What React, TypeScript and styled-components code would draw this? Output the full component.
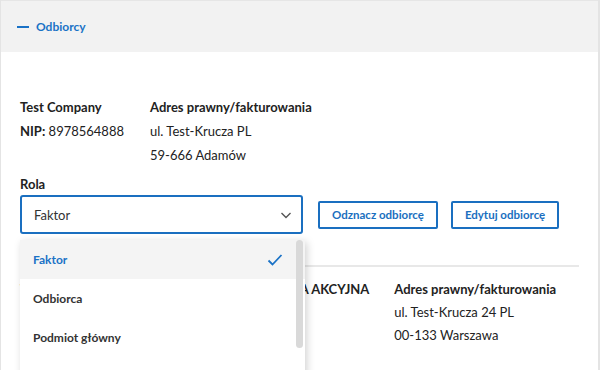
import React from "react";
import styled, { createGlobalStyle } from "styled-components";

const GlobalStyle = createGlobalStyle`
  html, body { margin: 0; padding: 0; background: #ffffff; }
  body { font-family: Lato, "Open Sans", Arial, sans-serif; color: #222222; }
  * { box-sizing: border-box; }
`;

const Panel = styled.div`
  width: 600px;
  height: 370px;
  overflow: hidden;
  border-left: 1px solid #e4e4e4;
  border-right: 2px solid #e4e4e4;
  background: #ffffff;
`;

const Header = styled.div`
  height: 52px;
  background: #f2f2f2;
  border-top: 1px solid #e6e6e6;
  display: flex;
  align-items: center;
  gap: 7px;
  padding-left: 16px;
`;

const Dash = styled.span`
  display: block;
  width: 12px;
  height: 2px;
  background: #1a72c6;
`;

const HeaderTitle = styled.span`
  font-size: 12px;
  font-weight: 700;
  color: #1a72c6;
`;

const Body = styled.div`
  padding: 43px 19px 0 19px;
`;

const Entity = styled.div`
  display: flex;
  gap: 26px;
`;

const Column = styled.div`
  display: flex;
  flex-direction: column;
`;

const Line = styled.div<{ $bold?: boolean }>`
  font-size: 13px;
  line-height: 24px;
  font-weight: ${(p) => (p.$bold ? 700 : 400)};
  white-space: nowrap;
`;

const Strong = styled.span`
  font-weight: 700;
`;

const Label = styled.div`
  margin-top: 7px;
  font-size: 13px;
  font-weight: 700;
  line-height: 20px;
  margin-bottom: 1px;
`;

const ControlRow = styled.div`
  display: flex;
  align-items: center;
  gap: 15px;
`;

const ButtonGroup = styled.div`
  display: flex;
  gap: 13px;
`;

const SelectWrap = styled.div`
  position: relative;
  width: 283px;
`;

const SelectBox = styled.div`
  height: 39px;
  border: 2px solid #1a6fc0;
  border-radius: 3px;
  display: flex;
  align-items: center;
  justify-content: space-between;
  padding: 0 8px 0 12px;
  font-size: 13px;
  color: #333333;
`;

const Button = styled.button`
  height: 28px;
  padding: 0 12px;
  border: 2px solid #1a6fc0;
  border-radius: 2px;
  background: #ffffff;
  color: #1a6fc0;
  font-family: inherit;
  font-size: 11.5px;
  font-weight: 700;
  cursor: pointer;
`;

const Menu = styled.div`
  position: absolute;
  top: calc(100% + 6px);
  left: 0;
  width: 285px;
  height: 200px;
  background: #ffffff;
  box-shadow: 2px 2px 8px rgba(0, 0, 0, 0.18);
  z-index: 10;
`;

const Option = styled.div<{ $active?: boolean }>`
  height: 39px;
  display: flex;
  align-items: center;
  justify-content: space-between;
  padding: 0 22px 0 13px;
  font-size: 12px;
  font-weight: 700;
  color: ${(p) => (p.$active ? "#1a72c6" : "#333333")};
  background: ${(p) => (p.$active ? "#f4f4f4" : "#ffffff")};
`;

const Scrollbar = styled.div`
  position: absolute;
  top: 0;
  right: 2px;
  width: 7px;
  height: 108px;
  border-radius: 4px;
  background: #d9d9d9;
`;

const Divider = styled.div`
  margin-top: 31px;
  height: 2px;
  background: #e8e8e8;
`;

const Entity2 = styled(Entity)`
  margin-top: 11px;
  gap: 25px;
`;

const Line2 = styled(Line)`
  line-height: 23px;
`;

export default function App() {
  return (
    <>
      <GlobalStyle />
      <Panel>
        <Header>
          <Dash />
          <HeaderTitle>Odbiorcy</HeaderTitle>
        </Header>
        <Body>
          <Entity>
            <Column>
              <Line $bold>Test Company</Line>
              <Line>
                <Strong>NIP:</Strong> 8978564888
              </Line>
            </Column>
            <Column>
              <Line $bold>Adres prawny/fakturowania</Line>
              <Line>ul. Test-Krucza PL</Line>
              <Line>59-666 Adamów</Line>
            </Column>
          </Entity>
          <Label>Rola</Label>
          <ControlRow>
            <SelectWrap>
              <SelectBox>
                <span>Faktor</span>
                <svg width="14" height="14" viewBox="0 0 14 14" fill="none">
                  <path d="M2.5 5 L7 9.5 L11.5 5" stroke="#555" strokeWidth="1.4" />
                </svg>
              </SelectBox>
              <Menu>
                <Option $active>
                  <span>Faktor</span>
                  <svg width="16" height="14" viewBox="0 0 16 14" fill="none">
                    <path d="M1.5 7.5 L5.5 11.5 L14.5 2" stroke="#1a72c6" strokeWidth="1.8" />
                  </svg>
                </Option>
                <Option>Odbiorca</Option>
                <Option>Podmiot główny</Option>
                <Scrollbar />
              </Menu>
            </SelectWrap>
            <ButtonGroup>
              <Button>Odznacz odbiorcę</Button>
              <Button>Edytuj odbiorcę</Button>
            </ButtonGroup>
          </ControlRow>
          <Divider />
          <Entity2>
            <Column>
              <Line2 $bold>TESTOWA GRUPA FAKTORINGOWA PL SPÓŁKA AKCYJNA</Line2>
            </Column>
            <Column>
              <Line2 $bold>Adres prawny/fakturowania</Line2>
              <Line2>ul. Test-Krucza 24 PL</Line2>
              <Line2>00-133 Warszawa</Line2>
            </Column>
          </Entity2>
        </Body>
      </Panel>
    </>
  );
}
